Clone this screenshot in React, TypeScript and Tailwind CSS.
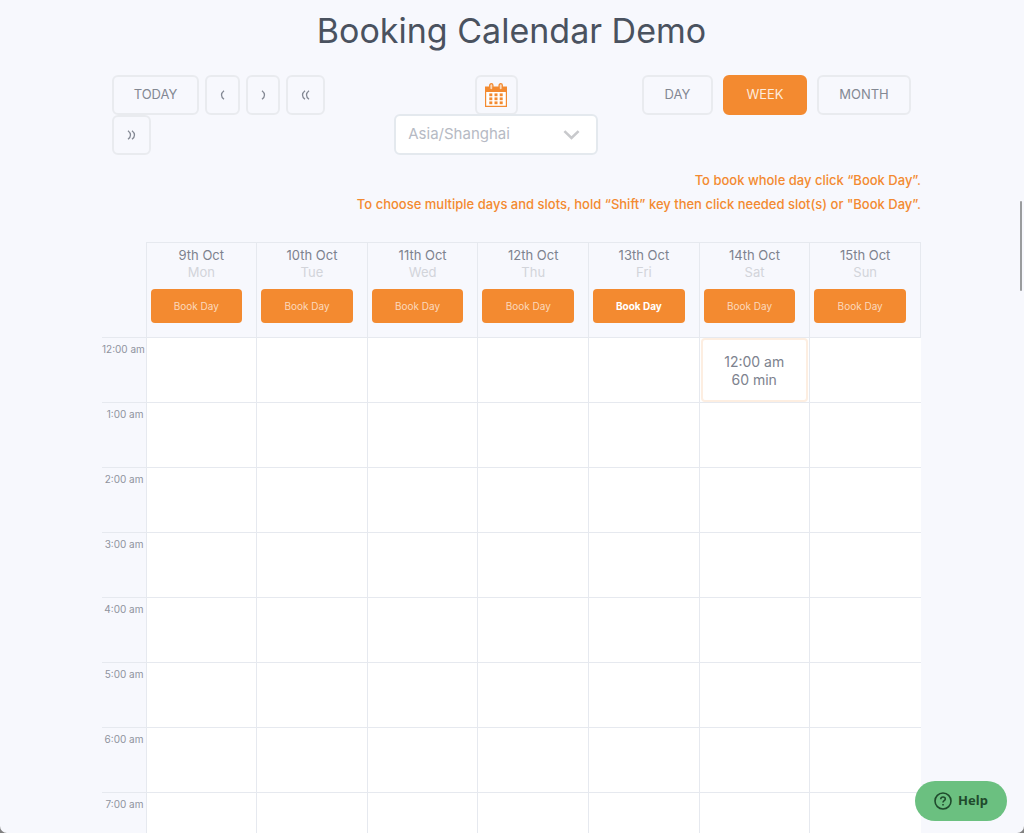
import type { ReactNode } from "react";

const days = [
  { date: "9th Oct", name: "Mon" },
  { date: "10th Oct", name: "Tue" },
  { date: "11th Oct", name: "Wed" },
  { date: "12th Oct", name: "Thu" },
  { date: "13th Oct", name: "Fri", current: true },
  { date: "14th Oct", name: "Sat" },
  { date: "15th Oct", name: "Sun" },
];

const hours = ["12:00 am", "1:00 am", "2:00 am", "3:00 am", "4:00 am", "5:00 am", "6:00 am", "7:00 am"];

function ToolButton({ children, label, active, className = "" }: { children: ReactNode; label?: string; active?: boolean; className?: string }) {
  const tone = active ? "border-[#f38a30] bg-[#f38a30] text-[#fdebdc]" : "border-[#e9ebef] text-[#838893]";
  return (
    <button type="button" aria-label={label} className={`flex h-10 items-center justify-center rounded-md border-2 text-[13px] ${tone} ${className}`}>
      {children}
    </button>
  );
}

function Arrow({ double, flip }: { double?: boolean; flip?: boolean }) {
  return (
    <svg width="9" height="10" viewBox="0 0 9 10" fill="none" stroke="#838893" strokeWidth="1.3" className={flip ? "rotate-180" : ""}>
      {double ? (
        <path d="M4 .7C2.500 1.900 1.500 3.400 1.500 5s1 3.100 2.500 4.300M8 .7C6.500 1.900 5.500 3.400 5.500 5s1 3.100 2.500 4.300" />
      ) : (
        <path d="M6 .7C4.500 1.900 3.500 3.400 3.500 5s1 3.100 2.500 4.300" />
      )}
    </svg>
  );
}

function CalendarIcon() {
  return (
    <svg width="22" height="24" viewBox="0 0 22 24" fill="none">
      <path d="M.6 4h20.800v19.400H.6z" fill="#fff" stroke="#f38a30" strokeWidth="1.2" />
      <path d="M0 4h22v5H0z" fill="#f38a30" />
      <rect x="4.7" y=".7" width="3.2" height="6.2" rx="1.6" fill="#fbd9bb" stroke="#f38a30" strokeWidth="1.3" />
      <rect x="14.1" y=".7" width="3.2" height="6.2" rx="1.6" fill="#fbd9bb" stroke="#f38a30" strokeWidth="1.3" />
      {[10.4, 14.4, 18.4].map((y) =>
        [4.3, 9.5, 14.7].map((x) => <rect key={`${x}-${y}`} x={x} y={y} width="3" height="2.8" fill="#f38a30" />),
      )}
    </svg>
  );
}

export default function App() {
  return (
    <div className="relative h-screen overflow-hidden bg-[#f7f8fd] font-['Inter','Noto_Sans',sans-serif] text-[#7d828e]">
      <main className="pt-[7px] pr-[103px] pl-[102px]">
        <h1 className="text-center text-[34px] leading-12 text-[#4a525f]">Booking Calendar Demo</h1>

        <div className="mt-5 flex items-start pl-2.5">
          <div className="flex w-[30%] flex-wrap gap-x-1.5">
            <ToolButton className="w-[87px]">TODAY</ToolButton>
            <ToolButton label="Previous" className="w-[35px]"><Arrow /></ToolButton>
            <ToolButton label="Next" className="w-[34px]"><Arrow flip /></ToolButton>
            <ToolButton label="Jump back" className="w-[39px]"><Arrow double /></ToolButton>
            <ToolButton label="Jump forward" className="w-[39px]"><Arrow double flip /></ToolButton>
          </div>

          <div className="flex w-[35%] flex-col items-center">
            <ToolButton label="Choose date" className="w-[43px]"><CalendarIcon /></ToolButton>
            <div className="relative -mt-px w-[204px]">
              <select aria-label="Time zone" className="block h-[41px] w-full appearance-none rounded-md border-2 border-[#e4e9ee] bg-white px-3 text-[15px] text-[#b6bac4]">
                <option>Asia/Shanghai</option>
              </select>
              <svg className="pointer-events-none absolute top-4 right-[18px]" width="17" height="10" viewBox="0 0 18 11" fill="none" stroke="#c8c9cc" strokeWidth="2.8">
                <path d="M1.2 1.2 9 8.800l7.800-7.600" />
              </svg>
            </div>
          </div>

          <div className="flex w-[35%] justify-end pr-2.5">
            <ToolButton className="mr-2.5 w-[71px]">DAY</ToolButton>
            <ToolButton active className="mr-2.5 w-[84px]">WEEK</ToolButton>
            <ToolButton className="w-[94px]">MONTH</ToolButton>
          </div>
        </div>

        <div className="mt-[13px] text-right text-[13px] leading-6 font-medium text-[#f38a30]">
          <p>To book whole day click “Book Day”.</p>
          <p>To choose multiple days and slots, hold “Shift” key then click needed slot(s) or "Book Day”.</p>
        </div>

        <table className="mt-[26px] w-full table-fixed border-collapse">
          <colgroup>
            <col className="w-11" />
            {days.map((day) => <col key={day.date} />)}
          </colgroup>
          <thead>
            <tr className="h-[95px]">
              <td />
              {days.map((day) => (
                <th key={day.date} scope="col" className="border border-[#e6e9ef] pt-1 pr-3.5 pb-3 pl-1 align-top font-normal">
                  <div className="-mr-2.5 text-[13px] leading-[17px]">
                    <div>{day.date}</div>
                    <div className="text-[#d2d4da]">{day.name}</div>
                  </div>
                  <button type="button" className={`mt-2 h-[34px] w-full rounded bg-[#f38a30] text-[10px] ${day.current ? "font-bold text-white" : "text-[#fbd9bd]"}`}>
                    Book Day
                  </button>
                </th>
              ))}
            </tr>
          </thead>
          <tbody>
            {hours.map((hour, row) => (
              <tr key={hour} className="h-[65px]">
                <th scope="row" className="border-t border-[#e6e9ef] pt-[5px] pr-0.5 text-right align-top text-[10px] leading-3 font-normal whitespace-nowrap text-[#8f939d]">
                  {hour}
                </th>
                {days.map((day, column) => (
                  <td key={day.date} className="border-t border-l border-[#e6e9ef] bg-white p-0">
                    {row === 0 && column === 5 && (
                      <button type="button" className="mx-px block h-16 w-[107px] rounded border-2 border-[#fdeee1] pt-0.5 text-sm leading-[18px]">
                        12:00 am<br />60 min
                      </button>
                    )}
                  </td>
                ))}
              </tr>
            ))}
          </tbody>
        </table>
      </main>

      <button type="button" className="absolute right-[17px] bottom-3 flex h-10 w-[92px] items-center justify-center gap-1.5 rounded-full bg-[#6bc080] font-['Noto_Sans','Open_Sans',sans-serif] text-[13px] font-bold text-[#1f4a2c]">
        <svg width="18" height="18" viewBox="0 0 18 18" fill="none" stroke="currentColor" strokeWidth="1.6">
          <circle cx="9" cy="9" r="8" />
          <path d="M6.7 7.2C6.8 5.8 7.7 5 9 5s2.3.8 2.3 2c0 1.700-2.300 1.700-2.300 3.500" />
          <path d="M9 11.900v1.600" />
        </svg>
        Help
      </button>
      <div className="absolute top-[201px] right-0.5 h-[90px] w-0.5 rounded-full bg-[#9a9c9e]" />
      <svg className="absolute bottom-0 left-0" width="7" height="7" viewBox="0 0 7 7" fill="#808080"><path d="M0 0a7 7 0 0 0 7 7H0z" /></svg>
      <svg className="absolute right-0 bottom-0" width="7" height="7" viewBox="0 0 7 7" fill="#808080"><path d="M7 0a7 7 0 0 1-7 7h7z" /></svg>
    </div>
  );
}
